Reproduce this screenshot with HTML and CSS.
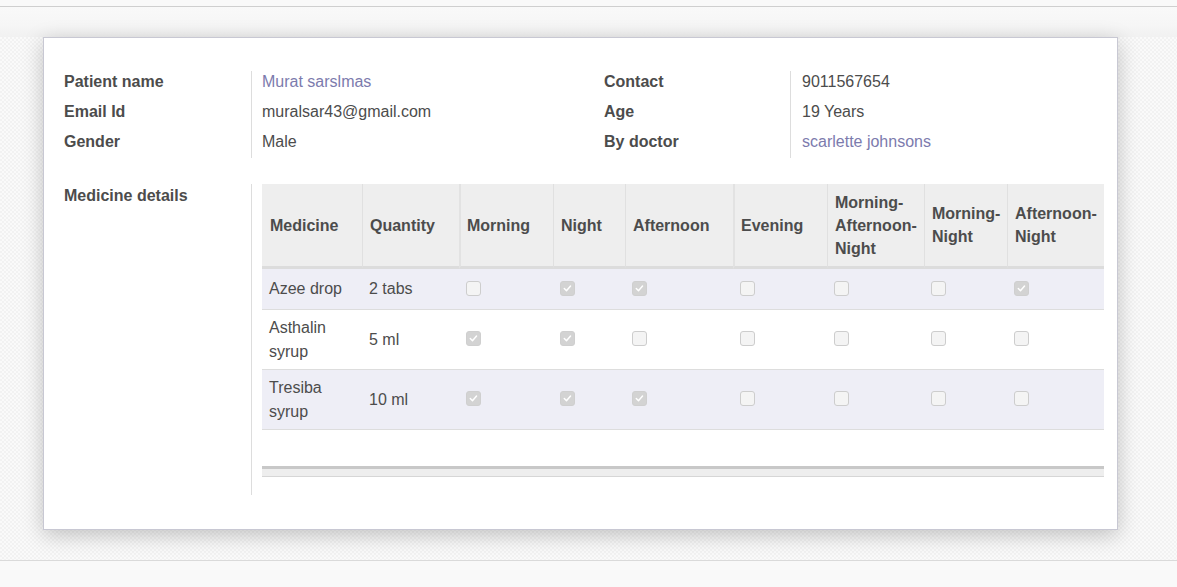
FILE: index.html
```html
<!DOCTYPE html>
<html>
<head>
<meta charset="utf-8">
<link rel="stylesheet" href="styles.css">
</head>
<body>
<div class="topbar"></div>
<div class="band"></div>
<div class="bg">
  <div class="sheet">
    <div class="info">
      <div class="lbl">Patient name</div>
      <div class="val link">Murat sarslmas</div>
      <div class="lbl">Contact</div>
      <div class="val val-r">9011567654</div>

      <div class="lbl">Email Id</div>
      <div class="val">muralsar43@gmail.com</div>
      <div class="lbl">Age</div>
      <div class="val val-r">19 Years</div>

      <div class="lbl last">Gender</div>
      <div class="val last">Male</div>
      <div class="lbl last">By doctor</div>
      <div class="val val-r link last">scarlette johnsons</div>
    </div>

    <div class="meds">
      <div class="lbl mlbl">Medicine details</div>
      <div class="mval">
        <table class="grid">
          <colgroup>
            <col class="c1"><col class="c2"><col class="c3"><col class="c4"><col class="c5"><col class="c6"><col class="c7"><col class="c8"><col class="c9">
          </colgroup>
          <thead>
            <tr class="hrow">
              <th class="first">Medicine</th>
              <th>Quantity</th>
              <th class="thick">Morning</th>
              <th>Night</th>
              <th>Afternoon</th>
              <th class="thick">Evening</th>
              <th>Morning-Afternoon-Night</th>
              <th>Morning-Night</th>
              <th>Afternoon-Night</th>
            </tr>
          </thead>
          <tbody>
            <tr class="r1 odd">
              <td>Azee drop</td>
              <td>2 tabs</td>
              <td><span class="cb"></span></td>
              <td><span class="cb on"><svg viewBox="0 0 15 15"><polyline points="3.8,7.6 6.3,10 11,4.6"/></svg></span></td>
              <td><span class="cb on"><svg viewBox="0 0 15 15"><polyline points="3.8,7.6 6.3,10 11,4.6"/></svg></span></td>
              <td><span class="cb"></span></td>
              <td><span class="cb"></span></td>
              <td><span class="cb"></span></td>
              <td><span class="cb on"><svg viewBox="0 0 15 15"><polyline points="3.8,7.6 6.3,10 11,4.6"/></svg></span></td>
            </tr>
            <tr class="r2">
              <td>Asthalin syrup</td>
              <td>5 ml</td>
              <td><span class="cb on"><svg viewBox="0 0 15 15"><polyline points="3.8,7.6 6.3,10 11,4.6"/></svg></span></td>
              <td><span class="cb on"><svg viewBox="0 0 15 15"><polyline points="3.8,7.6 6.3,10 11,4.6"/></svg></span></td>
              <td><span class="cb"></span></td>
              <td><span class="cb"></span></td>
              <td><span class="cb"></span></td>
              <td><span class="cb"></span></td>
              <td><span class="cb"></span></td>
            </tr>
            <tr class="r2 odd">
              <td>Tresiba syrup</td>
              <td>10 ml</td>
              <td><span class="cb on"><svg viewBox="0 0 15 15"><polyline points="3.8,7.6 6.3,10 11,4.6"/></svg></span></td>
              <td><span class="cb on"><svg viewBox="0 0 15 15"><polyline points="3.8,7.6 6.3,10 11,4.6"/></svg></span></td>
              <td><span class="cb on"><svg viewBox="0 0 15 15"><polyline points="3.8,7.6 6.3,10 11,4.6"/></svg></span></td>
              <td><span class="cb"></span></td>
              <td><span class="cb"></span></td>
              <td><span class="cb"></span></td>
              <td><span class="cb"></span></td>
            </tr>
          </tbody>
        </table>
        <div class="tfoot"></div>
      </div>
    </div>
  </div>
</div>
<div class="bottom"></div>
</body>
</html>
```

FILE: styles.css
```css
html, body {
  margin: 0;
  padding: 0;
}
body {
  background: #f9f9f9;
  font-family: "Liberation Sans", Arial, sans-serif;
  font-size: 16px;
  color: #4c4c4c;
}
.topbar {
  height: 6px;
  background: #f9f9f9;
  border-bottom: 1px solid #cfcfcf;
}
.band {
  height: 30px;
  background: linear-gradient(to bottom, #f9f9f9 0%, #f6f6f6 60%, #f1f1f1 100%);
}
.bg {
  background-color: #f6f6f6;
  background-image: repeating-conic-gradient(#f2f2f2 0 25%, #fafafa 0 50%);
  background-size: 4px 4px;
  padding: 0 0 30px 43px;
  border-bottom: 1px solid #dadada;
}
.sheet {
  background: #fff;
  border: 1px solid #c8c8d3;
  box-shadow: 0 5px 20px rgba(0, 0, 0, 0.22);
  padding: 33px 12px 34px 20px;
  box-sizing: border-box;
  width: 1075px;
}
.info {
  display: grid;
  grid-template-columns: 187px 353px 186px 1fr;
}
.lbl {
  font-weight: bold;
  padding: 2px 0 10px 0;
  line-height: 18px;
}
.val {
  border-left: 1px solid #dddddd;
  padding: 2px 0 10px 10px;
  line-height: 18px;
}
.val-r {
  padding-left: 11px;
}
.last {
  padding-bottom: 7px;
}
.link {
  color: #7c7bad;
}
.meds {
  margin-top: 26px;
  display: grid;
  grid-template-columns: 187px 1fr;
}
.mlbl {
  padding-top: 3px;
}
.mval {
  border-left: 1px solid #dddddd;
  padding: 0 0 18px 10px;
}
.grid {
  width: 842px;
  table-layout: fixed;
  border-collapse: separate;
  border-spacing: 0;
}
.c1 { width: 100px; }
.c2 { width: 97px; }
.c3 { width: 94px; }
.c4 { width: 72px; }
.c5 { width: 108px; }
.c6 { width: 94px; }
.c7 { width: 97px; }
.c8 { width: 83px; }
.c9 { width: 97px; }
.hrow {
  height: 85px;
}
.grid th {
  background: #eeeeee;
  font-weight: bold;
  text-align: left;
  vertical-align: middle;
  line-height: 23px;
  padding: 0 4px 0 7px;
  border-left: 1px solid #e0e0e0;
  border-bottom: 3px solid #dcdcdc;
}
.grid th.first {
  border-left: none;
  padding-left: 8px;
}
.grid th.thick {
  border-left: 2px solid #e2e2e2;
  padding-left: 6px;
}
.grid td {
  vertical-align: middle;
  line-height: 24px;
  padding: 0 4px 0 7px;
  border-bottom: 1px solid #dddddd;
}
.r1 {
  height: 41px;
}
.r2 {
  height: 60px;
}
.odd td {
  background: #eeeef6;
}
.cb {
  display: block;
  width: 15px;
  height: 15px;
  box-sizing: border-box;
  border: 1px solid #cdcdcd;
  border-radius: 3px;
  background: #f4f4f4;
  margin-top: -2px;
}
.cb.on {
  background: #d3d3d3;
  border-color: #cfcfcf;
}
.cb svg {
  display: block;
  width: 13px;
  height: 13px;
  fill: none;
  stroke: #ffffff;
  stroke-width: 1.7;
  stroke-linecap: round;
  stroke-linejoin: round;
  margin: 0;
}
.tfoot {
  margin-top: 36px;
  width: 842px;
  height: 7px;
  background: #eeeeee;
  border-top: 3px solid #c8c8c8;
  border-bottom: 1px solid #d6d6d6;
}
.bottom {
  height: 40px;
  background: #f9f9f9;
}
```
